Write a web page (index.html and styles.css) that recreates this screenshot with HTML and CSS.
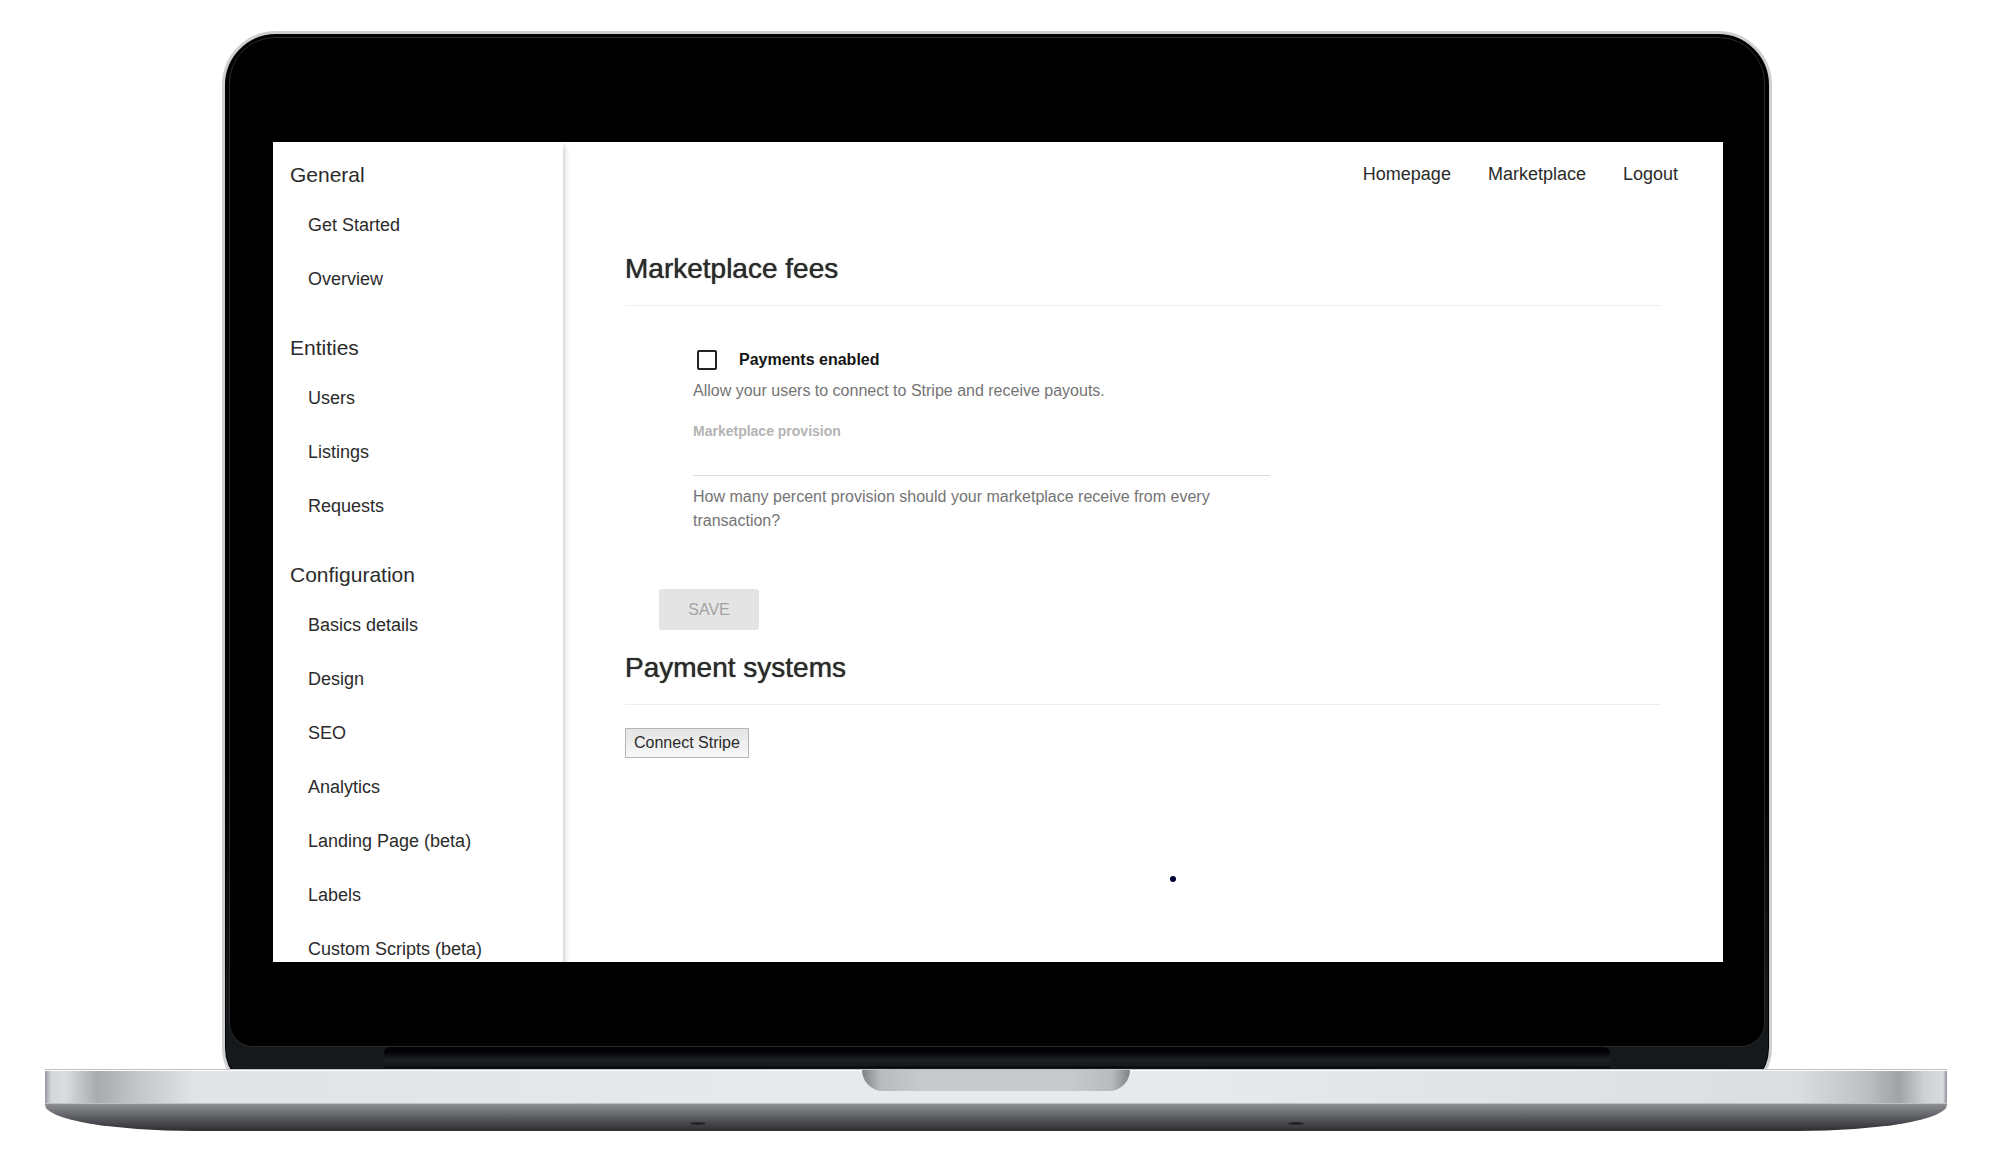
FILE: index.html
```html
<!DOCTYPE html>
<html lang="en">
<head>
<meta charset="utf-8">
<title>Marketplace admin</title>
<link rel="stylesheet" href="styles.css">
</head>
<body>
<div class="laptop">
  <div class="lid">
    <div class="bezel">
      <div class="screen">
        <nav class="sidebar" aria-label="Sections">
          <section class="group">
            <h2 class="group-title">General</h2>
            <ul class="group-list">
              <li><a href="#">Get Started</a></li>
              <li><a href="#">Overview</a></li>
            </ul>
          </section>
          <section class="group">
            <h2 class="group-title">Entities</h2>
            <ul class="group-list">
              <li><a href="#">Users</a></li>
              <li><a href="#">Listings</a></li>
              <li><a href="#">Requests</a></li>
            </ul>
          </section>
          <section class="group">
            <h2 class="group-title">Configuration</h2>
            <ul class="group-list">
              <li><a href="#">Basics details</a></li>
              <li><a href="#">Design</a></li>
              <li><a href="#">SEO</a></li>
              <li><a href="#">Analytics</a></li>
              <li><a href="#">Landing Page (beta)</a></li>
              <li><a href="#">Labels</a></li>
              <li><a href="#">Custom Scripts (beta)</a></li>
            </ul>
          </section>
        </nav>
        <div class="page">
          <header class="topbar">
            <a href="#">Homepage</a>
            <a href="#">Marketplace</a>
            <a href="#">Logout</a>
          </header>
          <main class="content">
            <h1 class="title">Marketplace fees</h1>
            <form class="form">
              <div class="fields">
                <label class="check"><input type="checkbox">Payments enabled</label>
                <p class="hint">Allow your users to connect to Stripe and receive payouts.</p>
                <label class="field-label" for="provision">Marketplace provision</label>
                <input class="field" id="provision" type="text">
                <p class="hint">How many percent provision should your marketplace receive from every transaction?</p>
              </div>
              <button class="save" type="submit" disabled>SAVE</button>
            </form>
            <h1 class="title">Payment systems</h1>
            <button class="connect" type="button">Connect Stripe</button>
          </main>
          <div class="loader"></div>
        </div>
      </div>
    </div>
    <div class="hinge"></div>
  </div>
  <div class="base">
    <div class="deck"><div class="notch"></div></div>
    <div class="underside"><i class="foot"></i><i class="foot"></i></div>
  </div>
</div>
</body>
</html>
```
FILE: styles.css
```css
* { box-sizing: border-box; }

body {
  margin: 0;
  background: #fff;
  color: #2b2b2b;
  font: 18px/24px "Liberation Sans", Arial, sans-serif;
}

h1, h2, p, ul { margin: 0; padding: 0; font-weight: 400; }
ul { list-style: none; }
a { color: inherit; text-decoration: none; }

/* Laptop */
.laptop { padding: 31px 45px 41px; }

.lid {
  margin: 0 175px -26px 177px;
  padding: 3px 4px 24px;
  border: 3px solid #cdcfd3;
  border-radius: 54px 54px 47px 47px;
  background: linear-gradient(#000 70%, #15191b 92%);
  box-shadow: inset 0 0 0 1px #000;
}

.bezel {
  padding: 104px 41px 84px 43px;
  border: 1px solid #2b2b2b;
  border-radius: 46px 46px 24px 24px;
  background: #000;
}

.hinge {
  height: 21px;
  margin: 0 155px;
  border-radius: 6px 6px 0 0;
  background: linear-gradient(#020206 20%, #1a1f22 60%, #15191c 90%, #000);
}

.base { position: relative; }

.deck {
  height: 35px;
  border: solid #bfc0c4;
  border-width: 1px 0;
  background: linear-gradient(90deg, #96979d 0, #d5d6d9 6px, #dcdddf 20px, #a9aaae 52px, #c2c3c7 88px, #e2e3e5 150px, #e8e9eb 40%, #e8e9eb 60%, #dcdde0 calc(100% - 150px), #bebfc1 calc(100% - 80px), #a1a2a4 calc(100% - 48px), #d0d1d4 calc(100% - 22px), #d9dadd calc(100% - 4px), #909197 100%);
  box-shadow: inset 0 1px #fff;
}

.notch {
  width: 268px;
  height: 21px;
  margin: 0 auto;
  border-radius: 0 0 21px 21px;
  background: linear-gradient(90deg, #808187, #b9babd 18px, #c8c9cb 60px, #c8c9cb 208px, #b9babd 250px, #808187);
}

.underside {
  display: flex;
  justify-content: space-between;
  align-items: end;
  height: 27px;
  padding: 0 643px 6px 645px;
  border-radius: 0 0 150px 150px / 0 0 26px 26px;
  background: linear-gradient(#8d8e92, #5b5c61 50%, #2d2d31);
}

.foot { width: 16px; height: 3px; border-radius: 50%; background: #222327; }

/* Application */
.screen {
  display: flex;
  aspect-ratio: 1450 / 820;
  overflow: hidden;
  background: #fff;
}

.sidebar {
  flex: 0 0 290px;
  padding: 19px 17px 0;
  box-shadow: 2px 4px 5px #0003;
}

.group { padding-bottom: 17px; }
.group-title { font-size: 21px; line-height: 27px; margin-bottom: 21px; }
.group-list { padding-left: 18px; }
.group-list li { height: 54px; padding-top: 4px; }

.page { flex: 1; min-width: 0; }

.topbar {
  display: flex;
  justify-content: flex-end;
  gap: 37px;
  padding: 20px 45px 0;
}

.content { padding: 65px 62px 0; }

.title {
  padding-bottom: 18px;
  border-bottom: 1px solid #eee;
  font-size: 28px;
  line-height: 36px;
  text-shadow: 0 0 1px #2b2b2b;
}

.form { padding: 40px 34px 20px; }
.fields { width: 611px; padding: 0 0 56px 34px; }

.check {
  display: flex;
  align-items: center;
  gap: 22px;
  height: 28px;
  padding-left: 4px;
  color: #151515;
  font-size: 16px;
  font-weight: 700;
}

.check input {
  appearance: none;
  width: 20px;
  height: 20px;
  margin: 0;
  border: 2px solid #222;
  border-radius: 2px;
}

.hint { padding-top: 5px; color: #747474; font-size: 16px; }

.field-label {
  display: block;
  padding-top: 16px;
  color: #b3b3b3;
  font-size: 14px;
  font-weight: 700;
}

.field {
  display: block;
  width: 100%;
  height: 33px;
  margin-bottom: 4px;
  padding: 0;
  border: 0;
  border-bottom: 1px solid #ddd;
  font: inherit;
}

.save {
  display: block;
  width: 100px;
  height: 41px;
  border: 0;
  border-radius: 3px;
  background: #e4e4e4;
  color: #a3a3a3;
  font: inherit;
  font-size: 16px;
}

.connect {
  display: block;
  height: 30px;
  margin-top: 23px;
  padding: 0 8px;
  border: 1px solid #b5b5b5;
  background: linear-gradient(#e4e4e4, #f8f8f8);
  color: inherit;
  font: inherit;
  font-size: 16px;
}

.loader {
  width: 6px;
  height: 6px;
  margin: 118px 0 0 calc(50% + 27px);
  border-radius: 50%;
  background: #003;
}
```
